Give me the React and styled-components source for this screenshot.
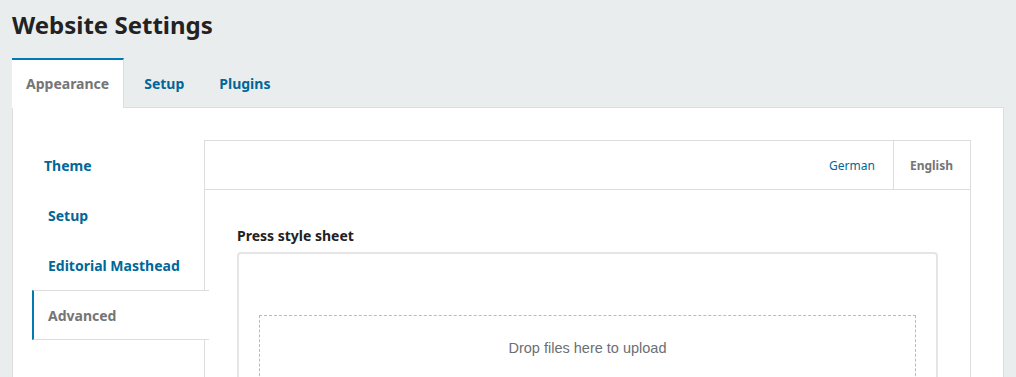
import React from 'react';
import styled, { createGlobalStyle } from 'styled-components';

const GlobalStyle = createGlobalStyle`
  body {
    margin: 0;
    background: #eaedee;
    font-family: "Noto Sans", "Open Sans", sans-serif;
    color: #222222;
  }
`;

const sideItems = [
  { label: 'Theme', indent: 12 },
  { label: 'Setup', indent: 16 },
  { label: 'Editorial Masthead', indent: 16 },
  { label: 'Advanced', indent: 16, active: true },
];

const App = () => {
  return (
    <Page>
      <GlobalStyle />
      <Title>Website Settings</Title>
      <Tabs>
        <Tab active>Appearance</Tab>
        <Tab>Setup</Tab>
        <Tab>Plugins</Tab>
      </Tabs>
      <Panel>
        <SideNav>
          {sideItems.map(item => (
            <SideItem key={item.label} active={item.active} indent={item.indent}>
              {item.label}
            </SideItem>
          ))}
        </SideNav>
        <Content>
          <LocaleBar>
            <Locale>German</Locale>
            <Locale active>English</Locale>
          </LocaleBar>
          <Body>
            <Label>Press style sheet</Label>
            <Uploader>
              <DropZone>Drop files here to upload</DropZone>
            </Uploader>
          </Body>
        </Content>
      </Panel>
    </Page>
  );
};

const Page = styled.div`
  padding: 0 12px;
  height: 377px;
  overflow: hidden;
`;

const Title = styled.h1`
  margin: 0;
  padding-top: 8px;
  font-size: 24px;
  line-height: 34px;
  font-weight: 700;
  color: #222222;
`;

const Tabs = styled.div`
  display: flex;
  gap: 6px;
  margin-top: 16px;
  position: relative;
  z-index: 1;
`;

const Tab = styled.div`
  height: 48px;
  box-sizing: border-box;
  display: flex;
  align-items: center;
  padding: 0 14px 2px;
  font-size: 14px;
  font-weight: 700;
  color: ${p => (p.active ? '#757575' : '#006798')};
  background: ${p => (p.active ? '#ffffff' : 'transparent')};
  border-top: 2px solid ${p => (p.active ? '#007ab2' : 'transparent')};
  border-right: 1px solid ${p => (p.active ? '#dddddd' : 'transparent')};
  margin-bottom: -1px;
  height: 50px;
`;

const Panel = styled.div`
  display: flex;
  background: #ffffff;
  border: 1px solid #dddddd;
  padding: 32px 32px 40px 19px;
  height: 400px;
`;

const SideNav = styled.div`
  width: 172px;
  flex-shrink: 0;
  display: flex;
  flex-direction: column;
`;

const SideItem = styled.div`
  height: 50px;
  box-sizing: border-box;
  display: flex;
  align-items: center;
  padding-left: ${p => p.indent - (p.active ? 2 : 0)}px;
  font-size: 14px;
  font-weight: 700;
  color: ${p => (p.active ? '#757575' : '#006798')};
  position: relative;
  z-index: 1;
  margin-right: -5px;
  background: ${p => (p.active ? '#ffffff' : 'transparent')};
  border-left: ${p => (p.active ? '2px solid #007ab2' : 'none')};
  border-top: 1px solid ${p => (p.active ? '#dddddd' : 'transparent')};
  border-bottom: 1px solid ${p => (p.active ? '#dddddd' : 'transparent')};
`;

const Content = styled.div`
  flex: 1;
  border: 1px solid #dddddd;
  display: flex;
  flex-direction: column;
`;

const LocaleBar = styled.div`
  height: 48px;
  display: flex;
  justify-content: flex-end;
  border-bottom: 1px solid #dddddd;
`;

const Locale = styled.div`
  display: flex;
  align-items: center;
  padding: ${p => (p.active ? '0 17px 0 16px' : '0 18px')};
  font-size: 12px;
  font-weight: ${p => (p.active ? 700 : 400)};
  color: ${p => (p.active ? '#757575' : '#006798')};
  border-left: ${p => (p.active ? '1px solid #dddddd' : 'none')};
`;

const Body = styled.div`
  padding: 36px 32px 0 32px;
`;

const Label = styled.div`
  font-size: 14px;
  font-weight: 700;
  line-height: 20px;
  color: #222222;
  margin-bottom: 6px;
`;

const Uploader = styled.div`
  border: 2px solid #e5e5e5;
  border-radius: 4px;
  padding: 61px 20px 20px;
`;

const DropZone = styled.div`
  border: 1px dashed #bbbbbb;
  padding: 23px 0;
  text-align: center;
  font-family: "Liberation Sans", Arial, sans-serif;
  font-size: 14.5px;
  line-height: 18px;
  color: #6b6f74;
`;

export default App;
